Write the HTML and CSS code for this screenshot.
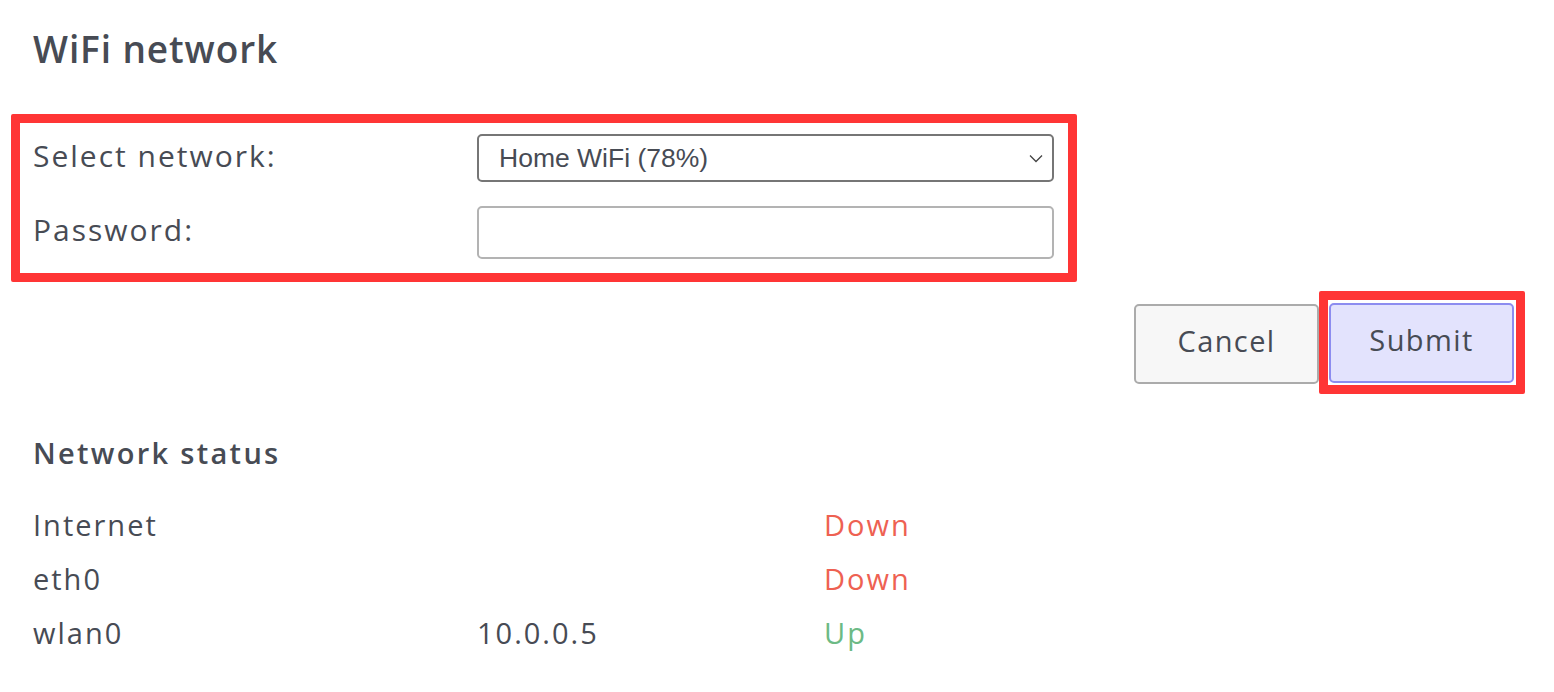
FILE: index.html
```html
<!DOCTYPE html>
<html lang="en">
<head>
    <meta charset="UTF-8">
    <title>WiFi network</title>
    <link rel="stylesheet" href="styles.css">
</head>
<body>
<div class="page">
    <h1 class="title">WiFi network</h1>

    <form class="form">
        <div class="fields">
            <label class="label" for="network">Select network:</label>
            <div class="select-wrap">
                <select class="select" id="network" name="network">
                    <option selected>Home WiFi (78%)</option>
                    <option>Office (54%)</option>
                    <option>Guest (31%)</option>
                </select>
                <svg class="chevron" width="14" height="9" viewBox="0 0 14 9">
                    <path d="M1 1.5 L7 7.5 L13 1.5" fill="none" stroke="#444" stroke-width="1.3"/>
                </svg>
            </div>

            <label class="label" for="password">Password:</label>
            <input class="input" id="password" type="password" name="password">
        </div>

        <div class="btns">
            <button type="button" class="btn btn-cancel">Cancel</button>
            <span class="mark">
                <button type="submit" class="btn btn-submit">Submit</button>
            </span>
        </div>
    </form>

    <h2 class="subtitle">Network status</h2>
    <div class="status">
        <span>Internet</span><span></span><span class="down">Down</span>
        <span>eth0</span><span></span><span class="down">Down</span>
        <span>wlan0</span><span>10.0.0.5</span><span class="up">Up</span>
    </div>
</div>
</body>
</html>
```

FILE: styles.css
```css
* {
    margin: 0;
    padding: 0;
    box-sizing: border-box;
}

body {
    background: #fff;
    color: #474b54;
    font-family: "Open Sans", "Noto Sans", sans-serif;
}

.page {
    width: 1554px;
    padding: 24px 0 0 0;
}

.title {
    font-size: 37px;
    font-weight: 600;
    line-height: 50px;
    margin-left: 33px;
    letter-spacing: 0.9px;
}

.form {
    margin-top: 40px;
}

.fields {
    margin-left: 11px;
    width: 1066px;
    border: 9px solid #ff3535;
    border-radius: 2px;
    padding: 11px 14px 14px 13px;
    display: grid;
    grid-template-columns: 444px 577px;
    row-gap: 24px;
    align-items: center;
}

.label {
    font-size: 30px;
    font-weight: 400;
    letter-spacing: 2px;
    padding-bottom: 6px;
}

.select-wrap {
    position: relative;
}

.select {
    appearance: none;
    width: 577px;
    height: 48px;
    border: 2px solid #767676;
    border-radius: 5px;
    background: #fff;
    padding: 0 20px;
    font: 400 26.5px "Liberation Sans", Arial, sans-serif;
    color: #474b54;
    outline: none;
}

.chevron {
    position: absolute;
    right: 11px;
    top: 20px;
    pointer-events: none;
}

.input {
    width: 577px;
    height: 53px;
    border: 2px solid #b3b3b3;
    border-radius: 5px;
    outline: none;
    padding: 0 12px;
    font-size: 22px;
}

.btns {
    display: flex;
    justify-content: flex-end;
    align-items: center;
    margin-top: 9px;
    margin-right: 29px;
}

.mark {
    display: block;
    border: 9px solid #ff3535;
    border-radius: 2px;
    padding: 3px 2px 2px 1px;
}

.btn {
    display: block;
    width: 185px;
    height: 80px;
    border-radius: 5px;
    font-family: "Open Sans", "Noto Sans", sans-serif;
    font-size: 29px;
    color: #474b54;
    letter-spacing: 1.4px;
    padding-bottom: 7px;
    cursor: pointer;
}

.btn-cancel {
    background: #f7f7f7;
    border: 2px solid #ababab;
    margin-top: 2px;
}

.btn-submit {
    background: #e3e3fd;
    border: 2px solid #8c8cf0;
}

.subtitle {
    font-size: 29px;
    font-weight: 600;
    margin: 39px 0 0 33px;
    line-height: 40px;
    letter-spacing: 2.3px;
}

.status {
    display: grid;
    grid-template-columns: 444px 347px 200px;
    grid-auto-rows: 54px;
    margin: 25px 0 0 33px;
    font-size: 29px;
    line-height: 54px;
    letter-spacing: 2px;
}

.down {
    color: #ee6152;
}

.up {
    color: #6cba85;
}
```
